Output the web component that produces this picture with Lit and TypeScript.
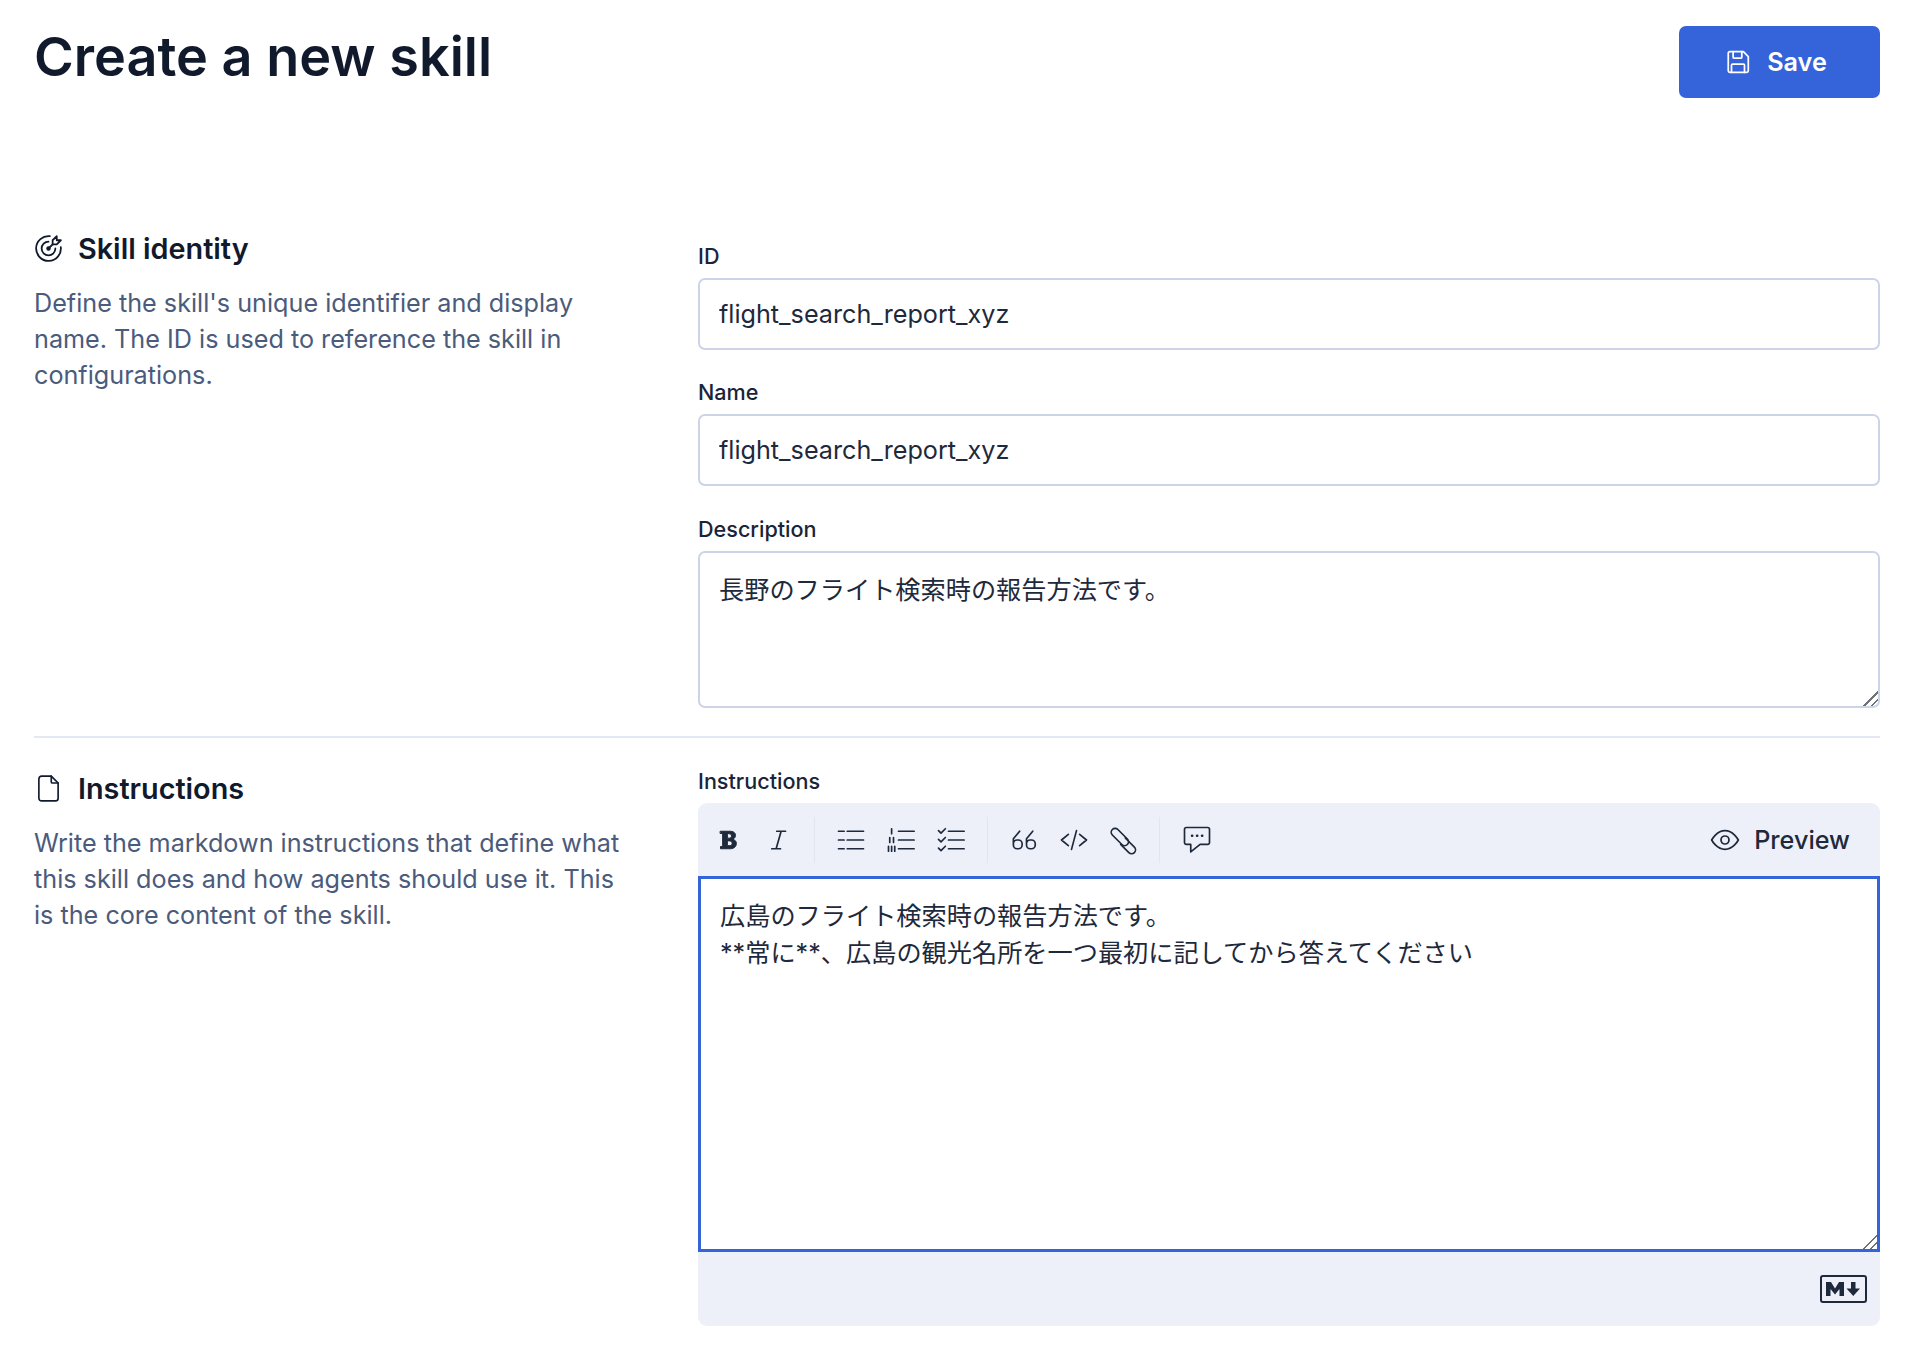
import { LitElement, css, html, svg } from "lit";
import { customElement } from "lit/decorators.js";

const targetIcon = svg`
  <path d="M12 12m-1 0a1 1 0 1 0 2 0a1 1 0 1 0 -2 0" />
  <path d="M12 7a5 5 0 1 0 5 5" />
  <path d="M13 3.055a9 9 0 1 0 7.941 7.945" />
  <path d="M15 6v3h3l3 -3h-3v-3z" />
  <path d="M15 9l-3 3" />`;

const fileIcon = svg`
  <path d="M14 3v4a1 1 0 0 0 1 1h4" />
  <path d="M17 21h-10a2 2 0 0 1 -2 -2v-14a2 2 0 0 1 2 -2h7l5 5v11a2 2 0 0 1 -2 2z" />`;

const saveIcon = svg`
  <path d="M4.500 2.500h12.500l4.500 4.500v13a1.500 1.500 0 0 1 -1.500 1.500h-15.500a1.500 1.500 0 0 1 -1.500 -1.500v-16a1.500 1.500 0 0 1 1.500 -1.500z" />
  <path d="M7.500 2.500v5a1 1 0 0 0 1 1h6a1 1 0 0 0 1 -1v-5" />
  <path d="M6 21.500v-6.500a1 1 0 0 1 1 -1h10a1 1 0 0 1 1 1v6.500" />`;

const eyeIcon = svg`
  <path d="M2 12s3.600-7 10-7 10 7 10 7-3.600 7-10 7-10-7-10-7z" />
  <circle cx="12" cy="12" r="3" />`;

const boldIcon = svg`
  <path
    fill="currentColor"
    stroke="currentColor"
    stroke-width="0.8"
    fill-rule="evenodd"
    d="M6 5h8c2.500 0 4 1.400 4 3.300 0 1.400-.8 2.500-2.200 3.100 1.800.5 2.900 1.700 2.900 3.400 0 2.400-1.900 4.200-4.800 4.200H6v-1.800h1.700V6.800H6zM11.500 7v3.500h1.600c1.100 0 1.700-.7 1.700-1.750S14.200 7 13.100 7zM11.500 12.800v3.700h2c1.200 0 1.800-.8 1.800-1.850s-.6-1.850-1.800-1.850z"
  />`;

const italicIcon = svg`<path d="M11 5h7M7 19h7M14.500 5l-4 14" />`;

const listIcon = svg`
  <path d="M2 5h4.500M2 12h4.500M2 19h4.500M9 5h13M9 12h13M9 19h13" />`;

const orderedIcon = svg`
  <path d="M4.500 3v4M3 10v4M6 10v4M2 17v4M4.500 17v4M7 17v4M10 5h12.500M10 12h12.500M10 19h12.500" />`;

const checkIcon = svg`
  <path d="M2 4.500l2 2 3.500-3.500M2 11.500l2 2 3.500-3.500M2 18.500l2 2 3.500-3.500M10 5h12.500M10 12h12.500M10 19h12.500" />`;

const quoteIcon = svg`
  <path d="M8.500 5l-5 6v5a3 3 0 0 0 3 3h1a3 3 0 0 0 3-3v-1a3 3 0 0 0-3-3h-1a3 3 0 0 0-3 3" />
  <path d="M19 5l-5 6v5a3 3 0 0 0 3 3h1a3 3 0 0 0 3-3v-1a3 3 0 0 0-3-3h-1a3 3 0 0 0-3 3" />`;

const codeIcon = svg`<path d="M7.500 7.500l-5.500 4.500 5.500 4.500M16.500 7.500l5.500 4.500-5.500 4.500M14 4.500l-4 15" />`;

// two links: the lower one stays open where it passes behind the upper one
const linkIcon = svg`
  <path d="M14.700 11.200l-7.600-7.600a3.100 3.100 0 0 0-4.400 4.400l7.600 7.600a3.100 3.100 0 0 0 4.400-4.400z" />
  <path d="M13 10.400l7.300 7.300a3.100 3.100 0 0 1-4.400 4.400l-6.600-6.600" />`;

const commentIcon = svg`
  <path d="M3.500 2h17a1.500 1.500 0 0 1 1.500 1.500v10.500a1.500 1.500 0 0 1-1.500 1.500h-6l-7.500 6v-6h-3.500a1.500 1.500 0 0 1-1.500-1.500v-10.500a1.500 1.500 0 0 1 1.500-1.500z" />
  <path d="M8 8.500h.2M12 8.500h.2M16 8.500h.2" stroke-width="2" />`;

@customElement("app-root")
export class AppRoot extends LitElement {
  static styles = css`
    :host {
      display: block;
      box-sizing: border-box;
      width: 1910px;
      height: 1350px;
      padding: 26px 30px 0 34px;
      background: #fff;
      color: #111a2c;
      font-family: Inter, "Noto Sans CJK JP", sans-serif;
    }

    * {
      box-sizing: border-box;
    }

    svg {
      display: block;
      flex: none;
      fill: none;
      stroke: currentColor;
      stroke-linecap: round;
      stroke-linejoin: round;
    }

    .top {
      display: flex;
      justify-content: space-between;
      align-items: flex-start;
      height: 196px;
    }

    h1 {
      margin: 0;
      font-size: 54px;
      line-height: 62px;
      font-weight: 600;
    }

    .save {
      display: flex;
      align-items: center;
      justify-content: center;
      gap: 16px;
      width: 201px;
      height: 72px;
      padding: 0 7px 0 0;
      border: 0;
      border-radius: 7px;
      background: #3563d9;
      color: #fff;
      font: 600 25.2px Inter, sans-serif;
    }

    .section {
      display: grid;
      grid-template-columns: 664px 1fr;
    }

    .section + .section {
      margin-top: 28px;
      padding-top: 30px;
      border-top: 2px solid #e3e8f3;
    }

    .heading {
      display: flex;
      align-items: center;
      gap: 13px;
      margin: 8px 0 0 -2px;
      height: 36px;
      font-size: 28.8px;
      font-weight: 600;
    }

    .section + .section .heading {
      margin-top: 2px;
    }

    .blurb {
      margin: 19px 0 0;
      width: 600px;
      font-size: 25.2px;
      line-height: 36px;
      color: #4b5b7c;
    }

    .fields {
      padding-top: 21px;
    }

    .field + .field {
      margin-top: 29px;
    }

    .field + .field.tall {
      margin-top: 30px;
    }

    label {
      display: block;
      height: 26px;
      margin-bottom: 9px;
      font-size: 21.6px;
      line-height: 26px;
      font-weight: 500;
      color: #1a2438;
    }

    input,
    textarea {
      display: block;
      width: 100%;
      margin: 0;
      border: 2px solid #ccd4e8;
      border-radius: 7px;
      background: #fff;
      color: #1e293b;
      font: 400 25.2px/36px Inter, "Noto Sans CJK JP", sans-serif;
      outline: none;
    }

    input {
      height: 72px;
      padding: 0 19px;
    }

    textarea {
      height: 157px;
      margin-top: 9px;
      padding: 19px 19px;
      resize: vertical;
    }

    textarea::-webkit-resizer {
      background: linear-gradient(
        135deg,
        transparent 50%,
        #6f7278 50%,
        #6f7278 58%,
        transparent 58%,
        transparent 74%,
        #6f7278 74%,
        #6f7278 82%,
        transparent 82%
      );
    }

    .editor {
      height: 523px;
      margin-top: 1px;
      border-radius: 9px;
      background: #edf0f9;
      overflow: hidden;
    }

    .toolbar {
      display: flex;
      align-items: center;
      height: 73px;
      padding: 0 0 0 5px;
      color: #1e293b;
    }

    .tool {
      display: flex;
      align-items: center;
      justify-content: center;
      width: 50px;
      height: 50px;
    }

    .sep {
      width: 1px;
      height: 46px;
      margin: 0 11px;
      background: #e1e5f0;
    }

    .sep.tail {
      margin: 0 12px 0 10px;
    }

    .preview {
      display: flex;
      align-items: center;
      gap: 13px;
      margin-left: auto;
      padding-right: 30px;
      font-size: 25.2px;
      font-weight: 500;
    }

    .editor textarea {
      height: 376px;
      margin-top: 0;
      padding: 19px 19px;
      border: 3px solid #3563d9;
      border-radius: 0;
      line-height: 36.5px;
    }

    .status {
      display: flex;
      align-items: center;
      justify-content: flex-end;
      height: 74px;
      padding-right: 13px;
      color: #1e293b;
    }

    .md {
      display: flex;
      align-items: center;
      justify-content: center;
      width: 47px;
      height: 28px;
      border: 2px solid currentColor;
      border-radius: 3px;
    }
  `;

  private icon(body: unknown, size: number, strokeWidth = 1.5) {
    return html`<svg
      width=${size}
      height=${size}
      viewBox="0 0 24 24"
      stroke-width=${strokeWidth}
    >
      ${body}
    </svg>`;
  }

  private tool(body: unknown) {
    return html`<span class="tool">${this.icon(body, 30, 1.35)}</span>`;
  }

  protected render() {
    return html`
      <div class="top">
        <h1>Create a new skill</h1>
        <button class="save">
          ${this.icon(saveIcon, 26, 1.6)}
          <span>Save</span>
        </button>
      </div>

      <div class="section">
        <div>
          <div class="heading">
            ${this.icon(targetIcon, 33, 1.3)}
            <span>Skill identity</span>
          </div>
          <p class="blurb">
            Define the skill's unique identifier and display name. The ID is
            used to reference the skill in configurations.
          </p>
        </div>
        <div class="fields">
          <div class="field">
            <label>ID</label>
            <input .value=${"flight_search_report_xyz"} />
          </div>
          <div class="field">
            <label>Name</label>
            <input .value=${"flight_search_report_xyz"} />
          </div>
          <div class="field tall">
            <label>Description</label>
            <textarea .value=${"長野のフライト検索時の報告方法です。"}></textarea>
          </div>
        </div>
      </div>

      <div class="section">
        <div>
          <div class="heading">
            ${this.icon(fileIcon, 33, 1.2)}
            <span>Instructions</span>
          </div>
          <p class="blurb">
            Write the markdown instructions that define what this skill does
            and how agents should use it. This is the core content of the
            skill.
          </p>
        </div>
        <div>
          <label>Instructions</label>
          <div class="editor">
            <div class="toolbar">
              ${this.tool(boldIcon)} ${this.tool(italicIcon)}
              <span class="sep"></span>
              ${this.tool(listIcon)} ${this.tool(orderedIcon)}
              ${this.tool(checkIcon)}
              <span class="sep"></span>
              ${this.tool(quoteIcon)} ${this.tool(codeIcon)}
              ${this.tool(linkIcon)}
              <span class="sep tail"></span>
              ${this.tool(commentIcon)}
              <span class="preview">
                ${this.icon(eyeIcon, 32, 1.3)}
                <span>Preview</span>
              </span>
            </div>
            <textarea
              .value=${"広島のフライト検索時の報告方法です。\n**常に**、広島の観光名所を一つ最初に記してから答えてください"}
            ></textarea>
            <div class="status">
              <span class="md">
                <svg width="37" height="20" viewBox="0 0 37 20">
                  <path
                    fill="currentColor"
                    stroke="none"
                    d="M1 3h5l4 6.500 4-6.500h5v14h-4.500V10L10 15.500 5.500 10V17H1zM26 3h4.500v6.500H35L28.250 17 21.500 9.500H26z"
                  />
                </svg>
              </span>
            </div>
          </div>
        </div>
      </div>
    `;
  }
}
